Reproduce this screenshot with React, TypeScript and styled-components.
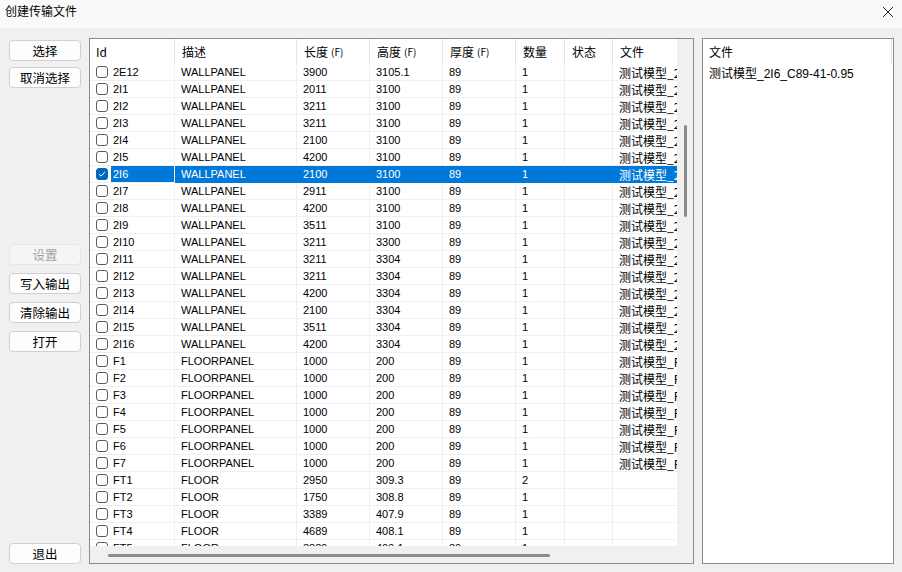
import React from "react";
import styled, { createGlobalStyle, css } from "styled-components";

const Global = createGlobalStyle`
  html, body { margin: 0; padding: 0; background: #f0f0f0; }
  body { font-family: "Liberation Sans", "Noto Sans CJK SC", sans-serif; }
`;

const Window = styled.div`
  width: 902px;
  height: 572px;
  display: flex;
  flex-direction: column;
  background: #f0f0f0;
  overflow: hidden;
`;

const TitleBar = styled.div`
  height: 28px;
  flex: none;
  display: flex;
  align-items: center;
  justify-content: space-between;
  padding: 0 8px 8px 5px;
  box-sizing: border-box;
  background: #f9f9f9;
  font: 12px "Noto Sans CJK SC", sans-serif;
  color: #000;
`;

const CloseBtn = styled.div`
  width: 12px;
  height: 12px;
  display: flex;
  margin-top: 4px;
`;

const Content = styled.div`
  flex: 1;
  display: flex;
  padding: 10px 8px 8px 9px;
  gap: 8px;
  min-height: 0;
`;

const Side = styled.div`
  width: 72px;
  flex: none;
  display: flex;
  flex-direction: column;
  padding-top: 2px;
`;

const BtnGroup = styled.div<{ $top?: number; $auto?: boolean; $gap?: number }>`
  display: flex;
  flex-direction: column;
  gap: ${(p) => p.$gap ?? 8}px;
  margin-top: ${(p) => (p.$auto ? "auto" : `${p.$top ?? 0}px`)};
`;

const Button = styled.div<{ $disabled?: boolean }>`
  height: 21px;
  box-sizing: border-box;
  display: flex;
  align-items: center;
  justify-content: center;
  border: 1px solid #d0d0d0;
  border-radius: 4px;
  background: #fdfdfd;
  font: 12.5px "Noto Sans CJK SC", sans-serif;
  color: #000;
  ${(p) =>
    p.$disabled &&
    css`
      background: #f5f5f5;
      border-color: #e6e6e6;
      color: #a0a0a0;
    `}
`;

const TablePanel = styled.div`
  width: 605px;
  flex: none;
  box-sizing: border-box;
  border: 1px solid #8c8c8c;
  background: #fff;
  display: grid;
  grid-template-columns: 1fr 16px;
  grid-template-rows: 1fr 17px;
`;

const Main = styled.div`
  overflow: hidden;
  display: flex;
  flex-direction: column;
  min-width: 0;
`;

const COLS = "85px 122px 73px 73px 73px 49px 48px 90px";

const HeadRow = styled.div`
  display: grid;
  grid-template-columns: ${COLS};
  height: 25px;
  flex: none;
  background: #fff;
`;

const HeadCell = styled.div<{ $first?: boolean }>`
  display: flex;
  align-items: center;
  padding-left: ${(p) => (p.$first ? 6 : 7)}px;
  border-right: 1px solid #e5e5e5;
  font: 12px "Noto Sans CJK SC", sans-serif;
  color: #000;
  white-space: nowrap;
  overflow: hidden;
`;

const Small = styled.span`
  font-size: 10px;
  margin-left: 3px;
`;

const Body = styled.div`
  flex: 1;
  overflow: hidden;
`;

const Row = styled.div`
  display: grid;
  grid-template-columns: ${COLS};
  height: 17px;
`;

const Cell = styled.div<{ $sel?: boolean; $cjk?: boolean }>`
  display: flex;
  align-items: center;
  padding-left: 6px;
  border-right: 1px solid #f0f0f0;
  border-bottom: 1px solid #f0f0f0;
  font-size: ${(p) => (p.$cjk ? 12 : 11)}px;
  font-family: ${(p) =>
    p.$cjk ? `"Noto Sans CJK SC", sans-serif` : `"Liberation Sans", "Noto Sans CJK SC", sans-serif`};
  color: #000;
  white-space: nowrap;
  overflow: hidden;
  ${(p) =>
    p.$sel &&
    css`
      background: #0078d7;
      color: #fff;
      border-color: #0078d7;
    `}
`;

const IdCell = styled.div`
  display: flex;
  align-items: center;
  padding-left: 6px;
  border-right: 1px solid #f0f0f0;
  border-bottom: 1px solid #f0f0f0;
  overflow: hidden;
`;

const Check = styled.div<{ $on?: boolean }>`
  width: 12px;
  height: 12px;
  flex: none;
  box-sizing: border-box;
  border: 1px solid ${(p) => (p.$on ? "#0067c0" : "#5c5c5c")};
  background: ${(p) => (p.$on ? "#0067c0" : "#fff")};
  border-radius: 3px;
  display: flex;
  align-items: center;
  justify-content: center;
`;

const IdLabel = styled.div<{ $sel?: boolean }>`
  flex: 1;
  align-self: stretch;
  display: flex;
  align-items: center;
  margin-left: 3px;
  padding-left: 2px;
  font: 11px "Liberation Sans", sans-serif;
  color: ${(p) => (p.$sel ? "#fff" : "#000")};
  background: ${(p) => (p.$sel ? "#0078d7" : "transparent")};
`;

const VScroll = styled.div`
  background: #f0f0f0;
  display: flex;
  justify-content: center;
`;

const VThumb = styled.div`
  width: 3px;
  height: 92px;
  margin-top: 86px;
  margin-left: 1px;
  background: #8a8a8a;
  border-radius: 2px;
`;

const HScroll = styled.div`
  background: #f0f0f0;
  display: flex;
  align-items: center;
`;

const HThumb = styled.div`
  height: 3px;
  width: 442px;
  margin-left: 18px;
  margin-top: 1px;
  background: #8a8a8a;
  border-radius: 2px;
`;

const Corner = styled.div`
  background: #f0f0f0;
`;

const FilePanel = styled.div`
  flex: 1;
  box-sizing: border-box;
  border: 1px solid #8c8c8c;
  background: #fff;
  display: flex;
  flex-direction: column;
`;

const FileHead = styled.div`
  height: 25px;
  display: flex;
  align-items: center;
  padding-left: 6px;
  font: 12px "Noto Sans CJK SC", sans-serif;
  border-right: 1px solid #e5e5e5;
  margin-right: 1px;
`;

const FileRow = styled.div`
  height: 17px;
  display: flex;
  align-items: center;
  padding-left: 6px;
  font: 12px "Liberation Sans", "Noto Sans CJK SC", sans-serif;
`;

type R = { id: string; desc: string; l: string; h: string; q: string; file?: string };

const wall: [string, string, string][] = [
  ["2E12", "3900", "3105.1"],
  ["2I1", "2011", "3100"],
  ["2I2", "3211", "3100"],
  ["2I3", "3211", "3100"],
  ["2I4", "2100", "3100"],
  ["2I5", "4200", "3100"],
  ["2I6", "2100", "3100"],
  ["2I7", "2911", "3100"],
  ["2I8", "4200", "3100"],
  ["2I9", "3511", "3100"],
  ["2I10", "3211", "3300"],
  ["2I11", "3211", "3304"],
  ["2I12", "3211", "3304"],
  ["2I13", "4200", "3304"],
  ["2I14", "2100", "3304"],
  ["2I15", "3511", "3304"],
  ["2I16", "4200", "3304"],
];

const rows: R[] = [
  ...wall.map(([id, l, h]) => ({
    id,
    desc: "WALLPANEL",
    l,
    h,
    q: "1",
    file: `测试模型_${id}_C89-41-0.95`,
  })),
  ...["F1", "F2", "F3", "F4", "F5", "F6", "F7"].map((id) => ({
    id,
    desc: "FLOORPANEL",
    l: "1000",
    h: "200",
    q: "1",
    file: `测试模型_F${id}_C89`,
  })),
  { id: "FT1", desc: "FLOOR", l: "2950", h: "309.3", q: "2" },
  { id: "FT2", desc: "FLOOR", l: "1750", h: "308.8", q: "1" },
  { id: "FT3", desc: "FLOOR", l: "3389", h: "407.9", q: "1" },
  { id: "FT4", desc: "FLOOR", l: "4689", h: "408.1", q: "1" },
  { id: "FT5", desc: "FLOOR", l: "3889", h: "409.1", q: "1" },
];

const SELECTED = "2I6";

export default function App() {
  return (
    <>
      <Global />
      <Window>
        <TitleBar>
          <span>创建传输文件</span>
          <CloseBtn>
            <svg width="12" height="12" viewBox="0 0 12 12">
              <path d="M1 1L11 11M11 1L1 11" stroke="#222" strokeWidth="1" fill="none" />
            </svg>
          </CloseBtn>
        </TitleBar>
        <Content>
          <Side>
            <BtnGroup $top={0} $gap={6}>
              <Button>选择</Button>
              <Button>取消选择</Button>
            </BtnGroup>
            <BtnGroup $top={156}>
              <Button $disabled>设置</Button>
              <Button>写入输出</Button>
              <Button>清除输出</Button>
              <Button>打开</Button>
            </BtnGroup>
            <BtnGroup $auto>
              <Button>退出</Button>
            </BtnGroup>
          </Side>
          <TablePanel>
            <Main>
              <HeadRow>
                <HeadCell $first>Id</HeadCell>
                <HeadCell>描述</HeadCell>
                <HeadCell>
                  长度<Small>(F)</Small>
                </HeadCell>
                <HeadCell>
                  高度<Small>(F)</Small>
                </HeadCell>
                <HeadCell>
                  厚度<Small>(F)</Small>
                </HeadCell>
                <HeadCell>数量</HeadCell>
                <HeadCell>状态</HeadCell>
                <HeadCell>文件</HeadCell>
              </HeadRow>
              <Body>
                {rows.map((r) => {
                  const sel = r.id === SELECTED;
                  return (
                    <Row key={r.id}>
                      <IdCell>
                        <Check $on={sel}>
                          {sel && (
                            <svg width="8" height="8" viewBox="0 0 8 8">
                              <path d="M1 4.2L3.1 6.2L7 1.8" stroke="#fff" strokeWidth="1" fill="none" />
                            </svg>
                          )}
                        </Check>
                        <IdLabel $sel={sel}>{r.id}</IdLabel>
                      </IdCell>
                      <Cell $sel={sel}>{r.desc}</Cell>
                      <Cell $sel={sel}>{r.l}</Cell>
                      <Cell $sel={sel}>{r.h}</Cell>
                      <Cell $sel={sel}>89</Cell>
                      <Cell $sel={sel}>{r.q}</Cell>
                      <Cell $sel={sel}></Cell>
                      <Cell $sel={sel} $cjk>
                        {r.file ?? ""}
                      </Cell>
                    </Row>
                  );
                })}
              </Body>
            </Main>
            <VScroll>
              <VThumb />
            </VScroll>
            <HScroll>
              <HThumb />
            </HScroll>
            <Corner />
          </TablePanel>
          <FilePanel>
            <FileHead>文件</FileHead>
            <FileRow>测试模型_2I6_C89-41-0.95</FileRow>
          </FilePanel>
        </Content>
      </Window>
    </>
  );
}
